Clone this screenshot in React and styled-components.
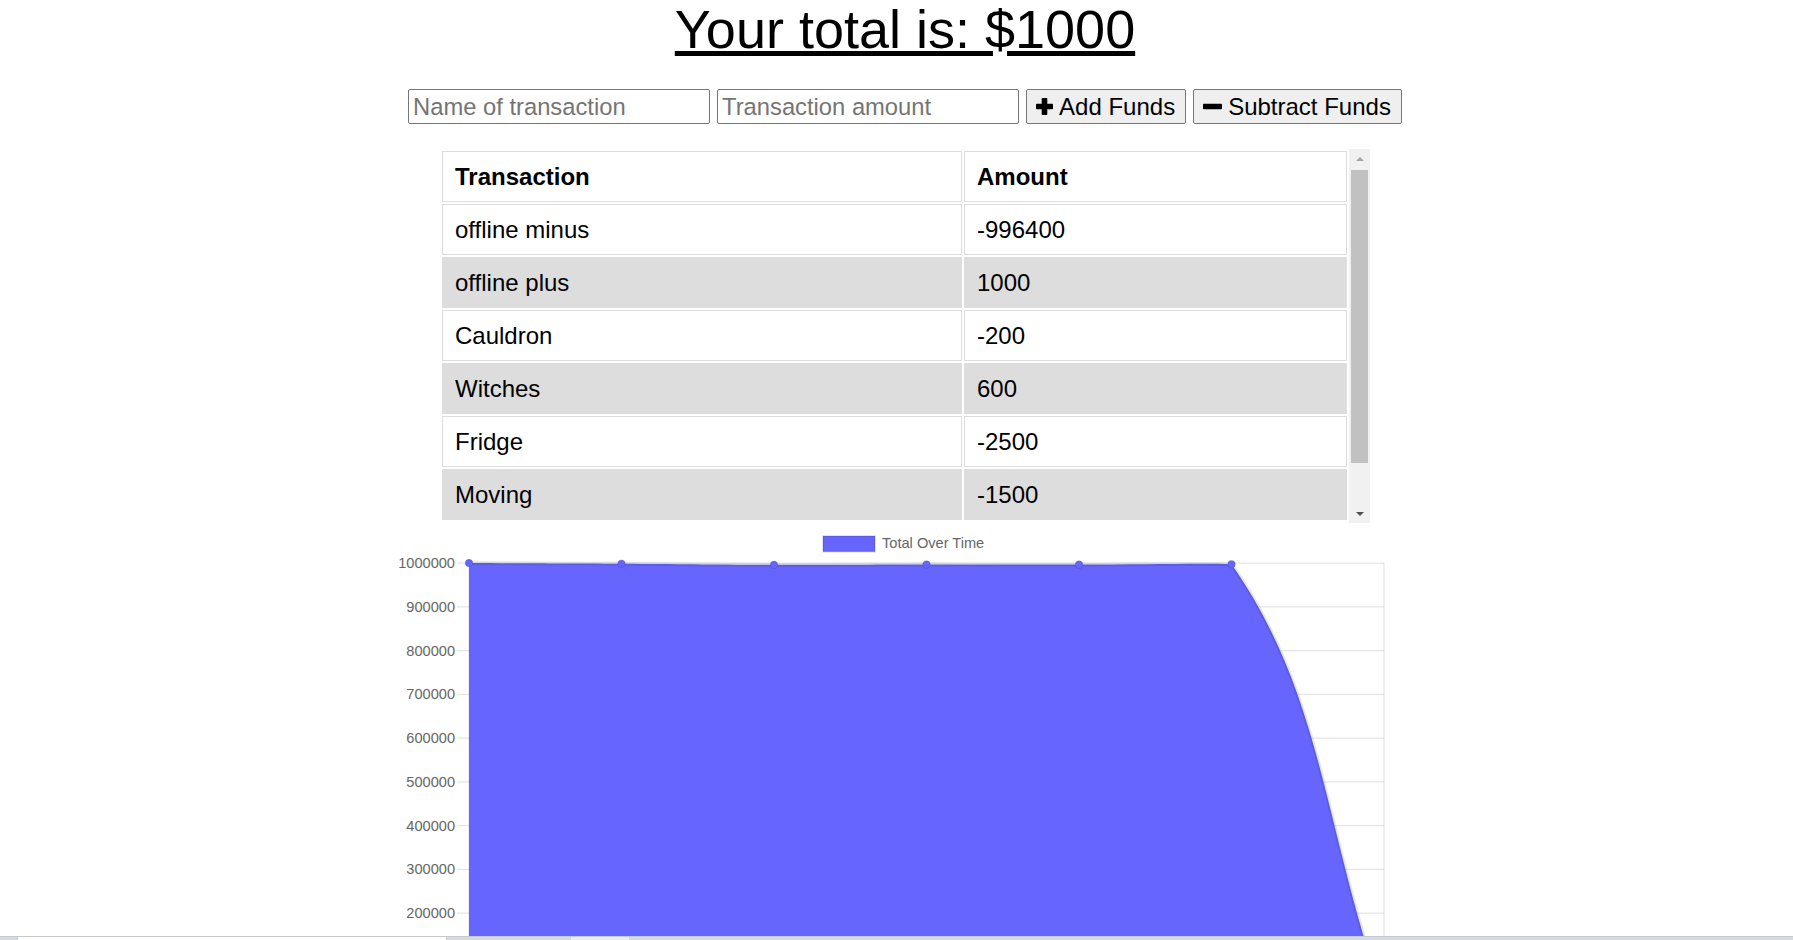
import styled, { createGlobalStyle } from "styled-components";

const GlobalStyle = createGlobalStyle`
  html, body {
    margin: 0;
    padding: 0;
    overflow: hidden;
    background: #fff;
    font-family: "Liberation Sans", Arial, sans-serif;
  }
`;

const Shell = styled.div`
  display: flex;
  flex-direction: column;
  height: 100vh;
`;

const Main = styled.main`
  flex: 1;
  overflow: hidden;
  padding-left: 17px;
  text-align: center;
`;

const Title = styled.h1`
  margin: 0;
  font-size: 54px;
  line-height: 59px;
  font-weight: normal;
  text-decoration: underline;
  color: #000;
`;

const Form = styled.div`
  display: flex;
  justify-content: center;
  gap: 7px;
  margin-top: 30px;
`;

const Input = styled.input`
  box-sizing: border-box;
  width: 302px;
  height: 35px;
  padding: 0 4px;
  border: 1px solid #767676;
  border-radius: 2px;
  font-family: "Liberation Sans", Arial, sans-serif;
  font-size: 23.75px;
  color: #000;
  &::placeholder {
    color: #757575;
  }
`;

const Button = styled.button`
  box-sizing: border-box;
  height: 35px;
  display: flex;
  align-items: center;
  gap: 6px;
  padding: 0 10px 0 9px;
  border: 1px solid #767676;
  border-radius: 2px;
  background: #efefef;
  font-family: "Liberation Sans", Arial, sans-serif;
  font-size: 24px;
  color: #000;
`;

const TableBox = styled.div`
  display: flex;
  width: 930px;
  height: 374px;
  margin: 25px auto 0;
`;

const TableViewport = styled.div`
  flex: 1;
  overflow: hidden;
`;

const ScrollTrack = styled.div`
  flex: 0 0 21px;
  display: flex;
  flex-direction: column;
  background: #f1f1f1;
`;

const ScrollArrow = styled.div`
  flex: 0 0 21px;
  display: flex;
  align-items: center;
  justify-content: center;
  &::before {
    content: "";
    width: 0;
    height: 0;
    border-left: 4px solid transparent;
    border-right: 4px solid transparent;
    ${(p) =>
      p.$down
        ? "border-top: 4px solid #505050; margin-top: 2px;"
        : "border-bottom: 4px solid #a3a3a3; margin-top: -2px;"}
  }
`;

const ScrollSpace = styled.div`
  flex: 1;
  padding: 0 2px;
`;

const Thumb = styled.div`
  height: 293px;
  background: #c1c1c1;
`;

const Table = styled.table`
  width: 100%;
  border-collapse: separate;
  border-spacing: 2px;
  text-align: left;
  font-size: 24px;
  color: #000;

  tbody tr:nth-child(even) td {
    background: #ddd;
  }
`;

const Th = styled.th`
  width: ${(p) => (p.$wide ? "494px" : "auto")};
  padding: 11px 12px;
  line-height: 27px;
  border: 1px solid #ddd;
  font-weight: bold;
  background: #fff;
`;

const Td = styled.td`
  padding: 11px 12px;
  line-height: 27px;
  border: 1px solid #ddd;
  background: #fff;
`;

const ChartSvg = styled.svg`
  display: block;
  margin: 2px auto 0;
  font-family: "Liberation Sans", Arial, sans-serif;
`;

const Taskbar = styled.div`
  flex: 0 0 4px;
  display: flex;
  align-items: stretch;
  background: #d3dce4;
  border-top: 1px solid #c6c9cc;
  box-sizing: border-box;
`;

const SearchBox = styled.div`
  margin-left: 17px;
  width: 428px;
  background: #fff;
  border-left: 1px solid #c9c9c9;
  border-right: 1px solid #c9c9c9;
`;

const TaskItem = styled.div`
  margin-left: 124px;
  width: 58px;
  background: #e9eef2;
`;

const PlusIcon = () => (
  <svg width="17" height="19" viewBox="0 0 17 19">
    <rect x="5.7" y="1" width="5.6" height="17" rx="0.8" fill="#000" />
    <rect x="0" y="6.7" width="17" height="5.6" rx="0.8" fill="#000" />
  </svg>
);

const MinusIcon = () => (
  <svg width="19" height="19" viewBox="0 0 19 19">
    <rect x="0" y="6.8" width="19" height="5.4" rx="0.8" fill="#000" />
  </svg>
);

const transactions = [
  { name: "offline minus", value: "-996400" },
  { name: "offline plus", value: "1000" },
  { name: "Cauldron", value: "-200" },
  { name: "Witches", value: "600" },
  { name: "Fridge", value: "-2500" },
  { name: "Moving", value: "-1500" },
];

// chart geometry, chart.js v2 look at 125% zoom (svg is 1040 wide, centred)
const CHART_H = 420;
const area = { left: 84, right: 999, top: 38, bottom: 475.5 };
const totals = [1000000, 998500, 996000, 996600, 996400, 997400, 1000];
const xAt = (i) => area.left + (i * (area.right - area.left)) / (totals.length - 1);
const yAt = (v) => area.top + (1 - v / 1000000) * (area.bottom - area.top);
const clampX = (x) => Math.min(Math.max(x, area.left), area.right);
const clampY = (y) => Math.min(Math.max(y, area.top), area.bottom);

function splinePoints(values, tension = 0.4) {
  const pts = values.map((v, i) => ({ x: xAt(i), y: yAt(v) }));
  return pts.map((p, i) => {
    const prev = pts[i - 1] || p;
    const next = pts[i + 1] || p;
    const d01 = Math.hypot(p.x - prev.x, p.y - prev.y);
    const d12 = Math.hypot(next.x - p.x, next.y - p.y);
    let s01 = d01 / (d01 + d12);
    let s12 = d12 / (d01 + d12);
    if (isNaN(s01)) s01 = 0;
    if (isNaN(s12)) s12 = 0;
    const fa = tension * s01;
    const fb = tension * s12;
    return {
      ...p,
      inX: clampX(p.x - fa * (next.x - prev.x)),
      inY: clampY(p.y - fa * (next.y - prev.y)),
      outX: clampX(p.x + fb * (next.x - prev.x)),
      outY: clampY(p.y + fb * (next.y - prev.y)),
    };
  });
}

const TotalChart = () => {
  const pts = splinePoints(totals);
  let line = `M${pts[0].x},${pts[0].y}`;
  for (let i = 1; i < pts.length; i++) {
    const a = pts[i - 1];
    const b = pts[i];
    line += ` C${a.outX},${a.outY} ${b.inX},${b.inY} ${b.x},${b.y}`;
  }
  const last = pts[pts.length - 1];
  const fill = `${line} L${last.x},${area.bottom} L${pts[0].x},${area.bottom} Z`;
  const ticks = Array.from({ length: 11 }, (_, i) => 1000000 - i * 100000);
  const grid = "rgba(0,0,0,0.1)";

  return (
    <ChartSvg width="1040" height={CHART_H} viewBox={`0 0 1040 ${CHART_H}`}>
      <rect x="438" y="11" width="52" height="15.7" fill="#6666ff" stroke="rgba(0,0,0,0.1)" strokeWidth="2" />
      <text x="497" y="23.3" fontSize="14.6" fill="#666">
        Total Over Time
      </text>

      {ticks.map((t) => (
        <g key={t}>
          <line x1={area.left - 12} x2={area.right} y1={yAt(t)} y2={yAt(t)} stroke={grid} strokeWidth="1.25" />
          {yAt(t) + 8 < CHART_H && (
            <text x={area.left - 14} y={yAt(t) + 5} fontSize="14.6" fill="#666" textAnchor="end">
              {t}
            </text>
          )}
        </g>
      ))}
      {totals.map((_, i) => (
        <line key={i} x1={xAt(i)} x2={xAt(i)} y1={area.top} y2={area.bottom + 12} stroke={grid} strokeWidth="1.25" />
      ))}

      <path d={fill} fill="#6666ff" />
      <path d={line} fill="none" stroke="rgba(0,0,0,0.1)" strokeWidth="3.75" />
      {pts.map((p, i) => (
        <circle key={i} cx={p.x} cy={p.y} r="3.75" fill="#6666ff" stroke="rgba(0,0,0,0.1)" strokeWidth="1.25" />
      ))}
    </ChartSvg>
  );
};

export default function App() {
  return (
    <Shell>
      <GlobalStyle />
      <Main>
        <Title>Your total is: $1000</Title>
        <Form>
          <Input type="text" placeholder="Name of transaction" />
          <Input type="number" placeholder="Transaction amount" />
          <Button>
            <PlusIcon />
            Add Funds
          </Button>
          <Button>
            <MinusIcon />
            Subtract Funds
          </Button>
        </Form>
        <TableBox>
          <TableViewport>
            <Table>
              <thead>
                <tr>
                  <Th $wide>Transaction</Th>
                  <Th>Amount</Th>
                </tr>
              </thead>
              <tbody>
                {transactions.map((t) => (
                  <tr key={t.name}>
                    <Td>{t.name}</Td>
                    <Td>{t.value}</Td>
                  </tr>
                ))}
              </tbody>
            </Table>
          </TableViewport>
          <ScrollTrack>
            <ScrollArrow />
            <ScrollSpace>
              <Thumb />
            </ScrollSpace>
            <ScrollArrow $down />
          </ScrollTrack>
        </TableBox>
        <TotalChart />
      </Main>
      <Taskbar>
        <SearchBox />
        <TaskItem />
      </Taskbar>
    </Shell>
  );
}
